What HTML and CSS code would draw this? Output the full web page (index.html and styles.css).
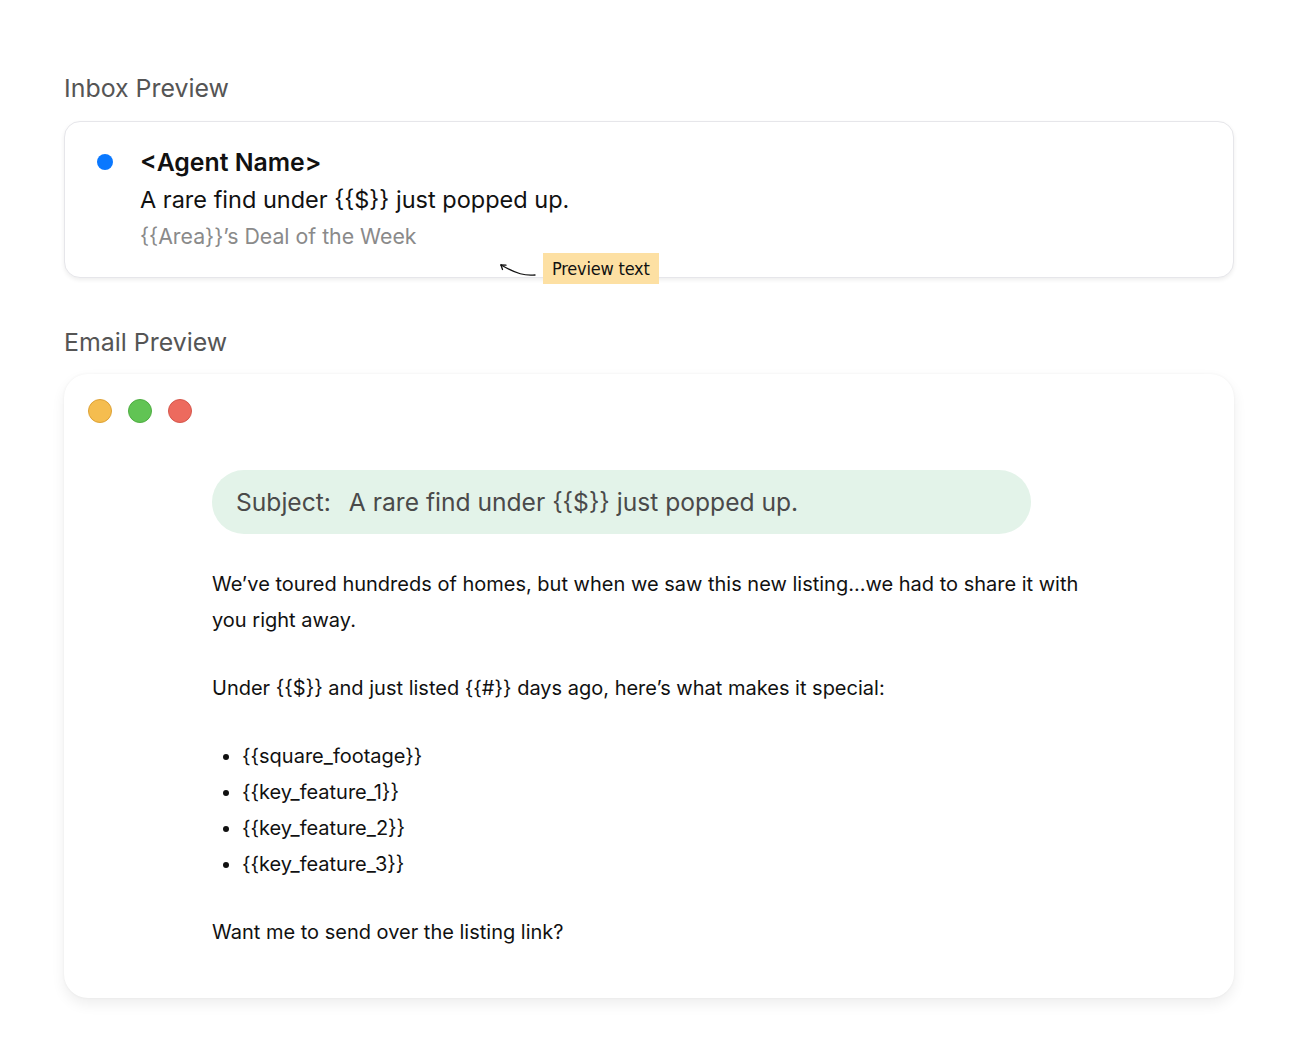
FILE: index.html
```html
<!DOCTYPE html>
<html lang="en">
<head>
<meta charset="utf-8">
<title>Inbox and Email Preview</title>
<link rel="stylesheet" href="styles.css">
</head>
<body>
<main class="page">
  <section class="section">
    <h2 class="section-title">Inbox Preview</h2>
    <div class="inbox-card">
      <span class="unread-dot"></span>
      <div class="inbox-text">
        <div class="sender">&lt;Agent Name&gt;</div>
        <div class="subject-line">A rare find under {{$}} just popped up.</div>
        <div class="preview-line">{{Area}}’s Deal of the Week</div>
      </div>
      <div class="annotation">
        <svg class="arrow" width="40" height="18" viewBox="0 0 40 18" fill="none" stroke="#111" stroke-width="1.3" stroke-linecap="round" stroke-linejoin="round">
          <path d="M38 15 C28 16 20 14 4 5"/>
          <path d="M4 5 L9 5.2"/>
          <path d="M4 5 L5.5 9.5"/>
        </svg>
        <span class="tag">Preview text</span>
      </div>
    </div>
  </section>

  <section class="section email-section">
    <h2 class="section-title">Email Preview</h2>
    <div class="email-card">
      <div class="window-dots">
        <span class="wdot yellow"></span>
        <span class="wdot green"></span>
        <span class="wdot red"></span>
      </div>
      <div class="email-body">
        <div class="subject-pill"><span class="subject-label">Subject:</span>A rare find under {{$}} just popped up.</div>
        <p class="para">We’ve toured hundreds of homes, but when we saw this new listing...we had to share it with you right away.</p>
        <p class="para">Under {{$}} and just listed {{#}} days ago, here’s what makes it special:</p>
        <ul class="features">
          <li>{{square_footage}}</li>
          <li>{{key_feature_1}}</li>
          <li>{{key_feature_2}}</li>
          <li>{{key_feature_3}}</li>
        </ul>
        <p class="para">Want me to send over the listing link?</p>
      </div>
    </div>
  </section>
</main>
</body>
</html>
```

FILE: styles.css
```css
* { box-sizing: border-box; }

html, body {
  margin: 0;
  padding: 0;
  background: #ffffff;
}

body {
  font-family: Inter, "Noto Sans", "Liberation Sans", sans-serif;
  color: #111;
}

.page {
  padding: 72px 64px 40px 64px;
  width: 1298px;
}

.section-title {
  margin: 0;
  font-size: 24.9px;
  line-height: 33px;
  font-weight: 400;
  color: #555;
}

.inbox-card {
  position: relative;
  margin-top: 16px;
  height: 157px;
  border: 1px solid #e6e6ea;
  border-radius: 16px;
  box-shadow: 0 2px 4px rgba(0, 0, 0, 0.07);
  display: flex;
  align-items: flex-start;
  padding: 25px 0 0 32px;
  background: #fff;
}

.unread-dot {
  width: 16px;
  height: 16px;
  border-radius: 50%;
  background: #0a78ff;
  margin-top: 7px;
  flex: none;
}

.inbox-text {
  margin-left: 27px;
  display: flex;
  flex-direction: column;
}

.sender {
  font-size: 24.8px;
  line-height: 30px;
  font-weight: 600;
  color: #111;
}

.subject-line {
  margin-top: 8px;
  font-size: 23.5px;
  line-height: 30px;
  color: #111;
}

.preview-line {
  margin-top: 8px;
  font-size: 21.3px;
  line-height: 26px;
  color: #8a8a8a;
}

.annotation {
  position: absolute;
  left: 432px;
  top: 131px;
  display: flex;
  align-items: center;
}

.arrow {
  margin-right: 6px;
}

.tag {
  background: #fde0a3;
  font-family: "Comic Sans MS", "DejaVu Sans Condensed", "Liberation Sans Narrow", sans-serif;
  font-size: 18px;
  line-height: 31px;
  height: 31px;
  padding: 0 9px;
  color: #111;
  letter-spacing: -0.2px;
}

.email-section {
  margin-top: 48px;
}

.email-card {
  margin-top: 15px;
  border-radius: 24px;
  background: #fff;
  box-shadow: 0 0 3px rgba(0, 0, 0, 0.05), 0 6px 14px rgba(0, 0, 0, 0.07);
  padding: 25px 24px 40px 24px;
  min-height: 624px;
}

.window-dots {
  display: flex;
  gap: 16px;
}

.wdot {
  width: 24px;
  height: 24px;
  border-radius: 50%;
  display: block;
}

.wdot.yellow { background: #f5bd4f; border: 1px solid #dea236; }
.wdot.green { background: #61c454; border: 1px solid #4fae42; }
.wdot.red { background: #ed6a5e; border: 1px solid #d5574c; }

.email-body {
  margin-left: 124px;
  margin-top: 47px;
  width: 880px;
}

.subject-pill {
  width: 819px;
  height: 64px;
  border-radius: 32px;
  background: #e3f3e9;
  display: flex;
  align-items: center;
  padding-left: 24px;
  font-size: 24.6px;
  color: #4a4a4a;
}

.subject-label {
  margin-right: 18px;
}

.para {
  margin: 32px 0 0 0;
  font-size: 20px;
  line-height: 36px;
  color: #111;
}

.features {
  margin: 32px 0 0 0;
  padding-left: 30px;
  font-size: 20px;
  line-height: 36px;
  color: #111;
}
```
